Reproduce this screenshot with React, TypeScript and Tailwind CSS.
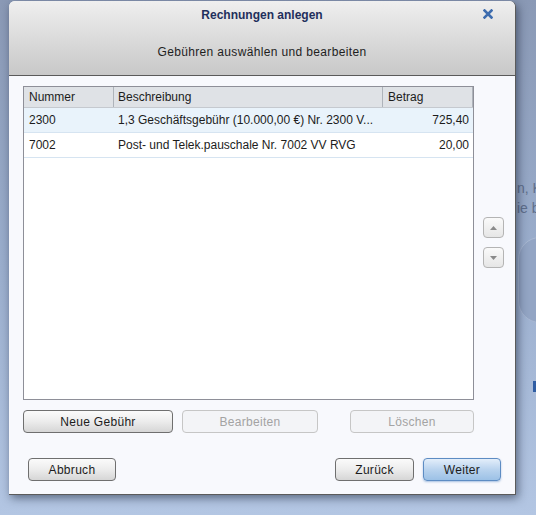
import React from "react";

interface Fee {
  nummer: string;
  beschreibung: string;
  betrag: string;
}

const fees: Fee[] = [
  { nummer: "2300", beschreibung: "1,3 Geschäftsgebühr (10.000,00 €) Nr. 2300 V...", betrag: "725,40" },
  { nummer: "7002", beschreibung: "Post- und Telek.pauschale Nr. 7002 VV RVG", betrag: "20,00" },
];

const btn =
  "h-[23px] shrink-0 rounded-[4px] border text-[12px] tracking-[0.3px] flex items-center justify-center";
const btnNormal =
  "border-[#6f6f6f] bg-gradient-to-b from-[#fbfbfb] via-[#ececec] to-[#d6d6d6] text-[#1c1c1c]";
const btnDisabled = "border-[#c6c6c6] bg-[#f3f4f7] text-[#a3a3a3]";

const ArrowButton = ({ up }: { up?: boolean }) => (
  <div className="w-[21px] h-[21px] rounded-[4px] border border-[#b4b4b4] bg-gradient-to-b from-[#fafafa] to-[#e6e6e6] flex items-center justify-center">
    <svg width="7" height="4" viewBox="0 0 7 4">
      {up ? <path d="M0 4 L3.5 0 L7 4 Z" fill="#8a8a8a" /> : <path d="M0 0 L3.5 4 L7 0 Z" fill="#8a8a8a" />}
    </svg>
  </div>
);

export default function App() {
  return (
    <div
      className="relative w-[536px] h-[515px] overflow-hidden bg-gradient-to-b from-[#8a99b5] via-[#9aadcc] to-[#b3c6e3]"
      style={{ fontFamily: '"Liberation Sans", Arial, sans-serif' }}
    >
      {/* background app peeking through on the right */}
      <div className="absolute left-[517px] top-[178px] whitespace-nowrap text-[14px] leading-[20px] text-[#5f6f8c]">
        <div>n, K</div>
        <div>ie b</div>
      </div>
      <div className="absolute left-[518px] top-[237px] w-[60px] h-[86px] rounded-[22px] border border-[#a9b8d2] bg-[#93a5c4]" />
      <div className="absolute left-[533px] top-[381px] w-[6px] h-[11px] bg-[#2f5da3]" />

      {/* dialog window */}
      <div className="absolute left-[9px] top-[1px] w-[507px] h-[494px] flex flex-col rounded-t-[6px] border-r border-b border-[#5b5b5b] bg-[#f8f9fd] shadow-[2px_3px_10px_rgba(20,30,50,0.55)]">
        <div className="h-[75px] shrink-0 rounded-t-[6px] border-b border-[#5a5a5a] bg-gradient-to-b from-[#efefef] to-[#c8c8c8] flex flex-col items-center relative">
          <div className="mt-[5px] text-[12px] font-bold text-[#1f2f5c]">Rechnungen anlegen</div>
          <div className="mt-[19px] text-[12px] tracking-[0.35px] text-[#1e1e1e]">Gebühren auswählen und bearbeiten</div>
          <svg className="absolute left-[474px] top-[8px]" width="10" height="10" viewBox="0 0 10 10">
            <path d="M1.5 1.5 L8.5 8.5 M8.5 1.5 L1.5 8.5" stroke="#3d6cae" strokeWidth="2.6" strokeLinecap="square" />
          </svg>
        </div>

        <div className="flex-1 flex flex-col pl-[14px] pt-[10px]">
          <div className="flex gap-[9px]">
            <div className="w-[451px] h-[314px] shrink-0 border border-[#8e8f98] bg-white text-[12px] text-[#1c1c1c]">
              <div className="flex h-[21px] bg-[#dfe2e6] border-b border-[#c5c9cf] leading-[20px]">
                <div className="w-[90px] pl-[5px] border-r border-[#aeb3ba]">Nummer</div>
                <div className="w-[269px] pl-[4px] border-r border-[#aeb3ba]">Beschreibung</div>
                <div className="flex-1 pl-[5px] border-r border-[#aeb3ba]">Betrag</div>
              </div>
              {fees.map((f, idx) => (
                <div
                  key={f.nummer}
                  className={`flex h-[25px] items-center border-b border-[#d6e4f1] ${idx === 0 ? "bg-[#e9f3fb]" : "bg-white"}`}
                >
                  <div className="w-[90px] pl-[5px]">{f.nummer}</div>
                  <div className="w-[269px] pl-[4px] whitespace-nowrap">{f.beschreibung}</div>
                  <div className="flex-1 pr-[4px] text-right">{f.betrag}</div>
                </div>
              ))}
            </div>
            <div className="flex flex-col gap-[9px] pt-[131px] shrink-0">
              <ArrowButton up />
              <ArrowButton />
            </div>
          </div>

          <div className="flex mt-[10px] w-[451px]">
            <button className={`${btn} ${btnNormal} w-[150px]`}>Neue Gebühr</button>
            <button className={`${btn} ${btnDisabled} w-[136px] ml-[9px]`}>Bearbeiten</button>
            <button className={`${btn} ${btnDisabled} w-[124px] ml-auto`}>Löschen</button>
          </div>

          <div className="flex mt-[25px] pl-[5px] pr-[14px]">
            <button className={`${btn} ${btnNormal} w-[88px]`}>Abbruch</button>
            <button className={`${btn} ${btnNormal} w-[79px] ml-auto`}>Zurück</button>
            <button className={`${btn} w-[78px] ml-[9px] border-[#5d8cc3] bg-gradient-to-b from-[#e3eefa] via-[#b9d3ee] to-[#9cc1e6] text-[#1c1c1c] shadow-[0_1px_2px_rgba(90,140,200,0.5)]`}>
              Weiter
            </button>
          </div>
        </div>
      </div>
    </div>
  );
}
